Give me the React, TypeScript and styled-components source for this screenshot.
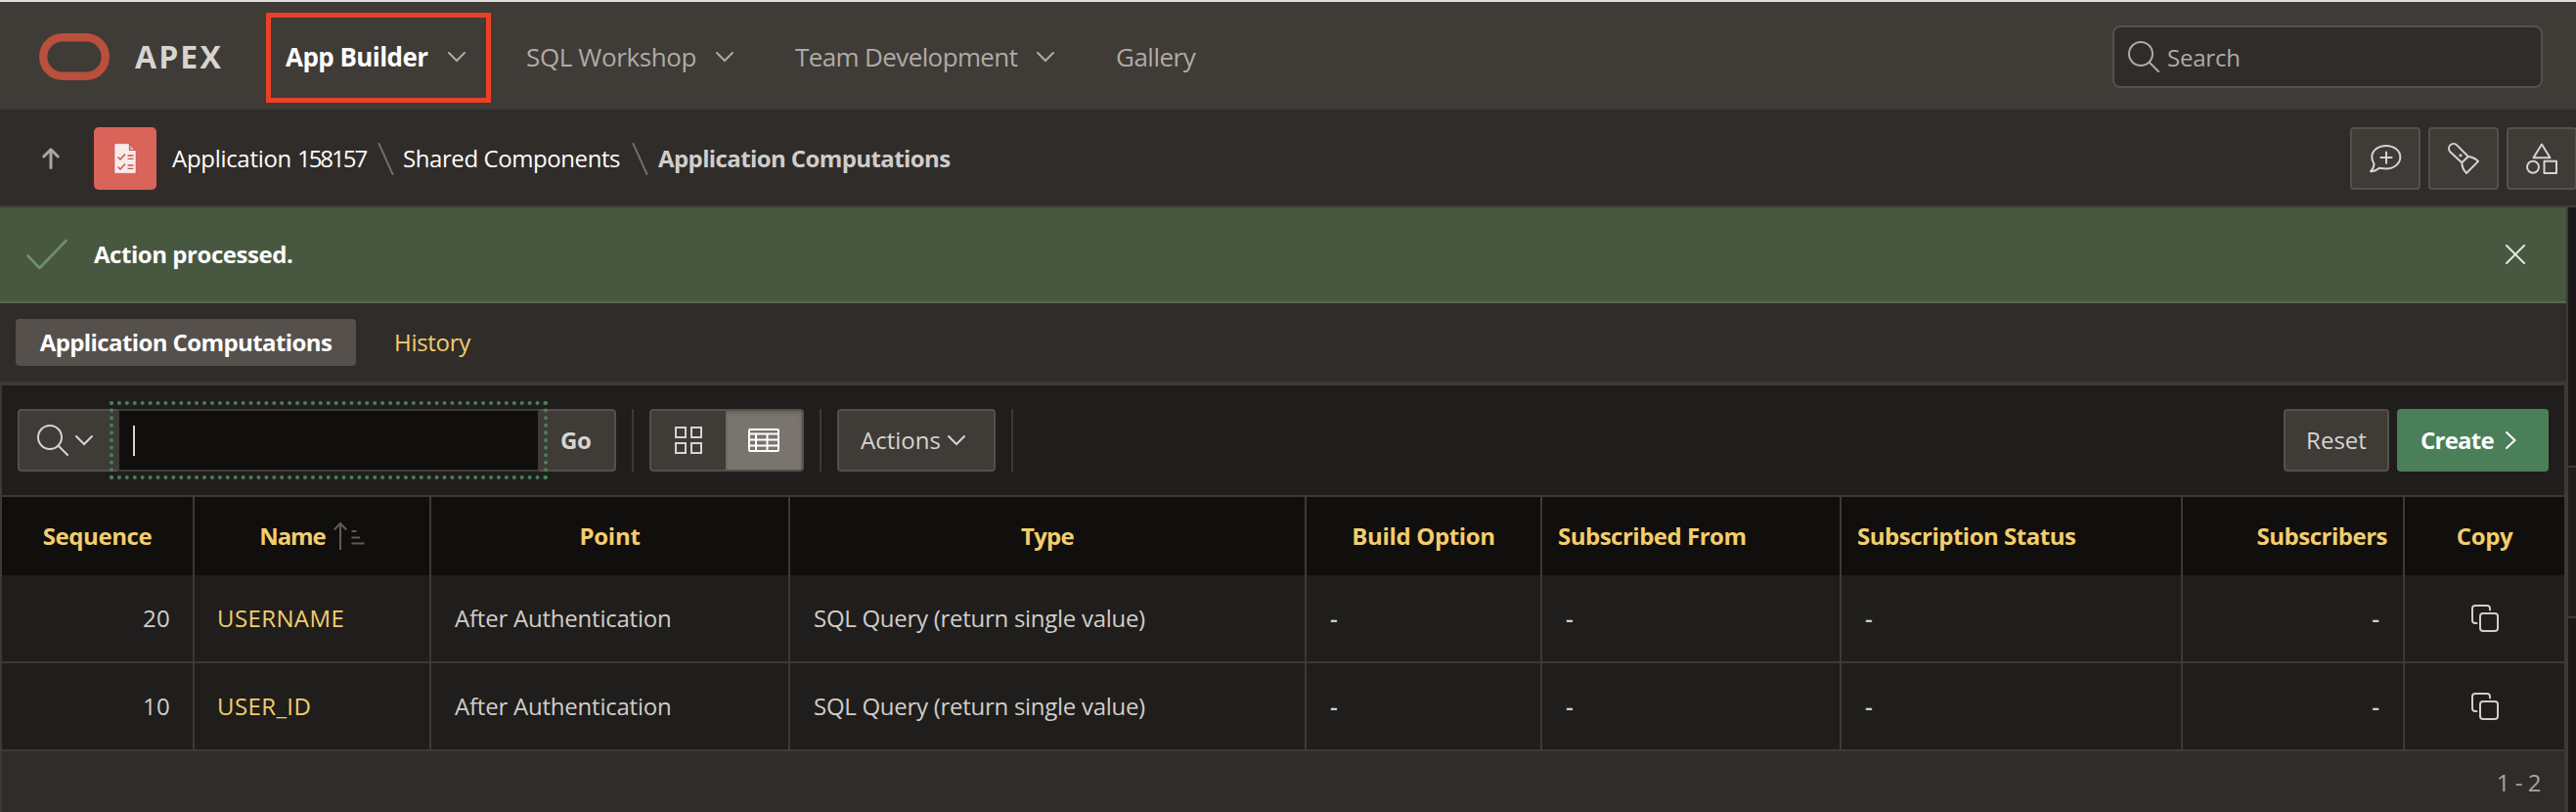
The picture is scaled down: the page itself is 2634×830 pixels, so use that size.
import React from "react";
import styled, { createGlobalStyle } from "styled-components";

const GlobalStyle = createGlobalStyle`
  * { box-sizing: border-box; }
  body {
    margin: 0;
    background: #302c2a;
    font-family: "Open Sans", "Noto Sans", sans-serif;
    font-size: 24px;
    color: #d0cdca;
    overflow: hidden;
  }
  svg { display: block; flex: none; }
`;

const Page = styled.div`
  width: 2634px;
  height: 830px;
  display: flex;
  flex-direction: column;
  overflow: hidden;
`;

const Label = styled.span<{ $track?: number }>`
  white-space: nowrap;
  letter-spacing: ${(p) => p.$track ?? 0}px;
`;

/* Top navigation */

const Header = styled.header`
  height: 112px;
  flex: none;
  display: flex;
  align-items: center;
  padding: 0 34px 0 40px;
  border-top: 2px solid #dedede;
  background: #3f3b36;
`;

const Brand = styled.div`
  width: 252px;
  display: flex;
  align-items: center;
  gap: 26px;
  font-size: 32px;
  font-weight: 700;
  color: #d6d4d1;
`;

const Nav = styled.nav`
  flex: 1;
  display: flex;
  align-items: center;
  padding-top: 2px;
  font-size: 26px;
  color: #aeaba7;
`;

const NavItem = styled.div<{ $width: number; $active?: boolean }>`
  position: relative;
  width: ${(p) => p.$width}px;
  display: flex;
  align-items: center;
  gap: 20px;
  color: ${(p) => (p.$active ? "#fff" : "inherit")};
  font-weight: ${(p) => (p.$active ? 700 : 400)};
`;

const Highlight = styled.span`
  position: absolute;
  top: -27px;
  left: -20px;
  width: 230px;
  height: 92px;
  border: 5px solid #ec4026;
`;

const SearchBox = styled.div`
  width: 440px;
  height: 64px;
  margin-top: 2px;
  display: flex;
  align-items: center;
  gap: 8px;
  padding-left: 14px;
  border: 2px solid #55504b;
  border-radius: 8px;
  background: #302c2a;
  color: #aeaba7;
`;

/* Breadcrumb bar */

const CrumbBar = styled.div`
  height: 100px;
  flex: none;
  display: flex;
  align-items: center;
  padding: 2px 0 0 43px;
  border-bottom: 2px solid #3f3b36;
  background: #302c2a;
`;

const AppTile = styled.div`
  width: 64px;
  height: 64px;
  margin: 0 16px 0 35px;
  display: flex;
  align-items: center;
  justify-content: center;
  border-radius: 5px;
  background: #d9645a;
`;

const Crumb = styled.div<{ $width: number; $indent?: number; $current?: boolean }>`
  width: ${(p) => p.$width}px;
  margin-top: -2px;
  padding-left: ${(p) => p.$indent ?? 0}px;
  color: ${(p) => (p.$current ? "#d0cdca" : "#fff")};
  font-weight: ${(p) => (p.$current ? 700 : 400)};
`;

const CrumbTools = styled.div`
  margin-left: auto;
  margin-right: -1px;
  display: flex;
  gap: 8px;
`;

const Button = styled.div<{ $width: number; $primary?: boolean; $bold?: boolean }>`
  width: ${(p) => p.$width}px;
  height: 64px;
  flex: none;
  display: flex;
  align-items: center;
  justify-content: center;
  border: 2px solid ${(p) => (p.$primary ? "#4b7f59" : "#55504b")};
  border-radius: 4px;
  background: ${(p) => (p.$primary ? "#4b7f59" : "#3f3b36")};
  color: ${(p) => (p.$primary ? "#fff" : "#d6d4d1")};
  font-weight: ${(p) => (p.$primary || p.$bold ? 700 : 400)};
`;

/* Body */

const Body = styled.div`
  flex: 1;
  display: flex;
  min-height: 0;
  ${Label} { margin-top: -2px; }
`;

const Main = styled.main`
  width: 2626px;
  display: flex;
  flex-direction: column;
  border-right: 2px solid #3d3a35;
`;

const SideStrip = styled.aside`
  flex: 1;
  display: flex;
  flex-direction: column;
  background: #1b1917;
`;

const SidePanel = styled.div<{ $height: number; $raised?: boolean }>`
  height: ${(p) => p.$height}px;
  border-bottom: 2px solid #3d3a35;
  background: ${(p) => (p.$raised ? "#201e1c" : "transparent")};
`;

const Notice = styled.div`
  height: 98px;
  flex: none;
  display: flex;
  align-items: center;
  justify-content: space-between;
  padding: 0 42px 0 27px;
  border-bottom: 2px solid #526a4c;
  background: #485840;
  color: #fff;
  font-weight: 700;
`;

const NoticeText = styled.div`
  display: flex;
  align-items: center;
  gap: 27px;
`;

const Tabs = styled.div`
  height: 84px;
  flex: none;
  display: flex;
  align-items: center;
  gap: 39px;
  padding-left: 16px;
  border-bottom: 4px solid #3d3a35;
  background: #302c2a;
  color: #f3cd6d;
`;

const ActiveTab = styled.div`
  width: 348px;
  height: 48px;
  display: flex;
  align-items: center;
  justify-content: center;
  border-radius: 4px;
  background: #55504b;
  color: #fff;
  font-weight: 700;
`;

const Report = styled.section`
  flex: 1;
  display: flex;
  flex-direction: column;
  border-left: 2px solid #3d3a35;
  border-right: 2px solid #3d3a35;
`;

const Toolbar = styled.div`
  height: 114px;
  flex: none;
  display: flex;
  align-items: center;
  padding: 0 16px;
  border-bottom: 2px solid #3d3a35;
  background: #201e1c;
`;

const SearchMenu = styled.div`
  width: 102px;
  height: 64px;
  display: flex;
  align-items: center;
  gap: 7px;
  padding-left: 18px;
  border: 2px solid #55504b;
  border-right: 0;
  border-radius: 4px 0 0 4px;
  background: #3f3b36;
`;

const SearchField = styled.div`
  width: 432px;
  height: 64px;
  display: flex;
  align-items: center;
  padding-left: 14px;
  border: 2px solid #3f3b36;
  background: #100f0d;
  outline: 4px dotted #4b7f59;
  outline-offset: 4px;
  z-index: 1;
`;

const Caret = styled.span`
  width: 2px;
  height: 31px;
  background: #d6d4d1;
`;

const GoButton = styled(Button)`
  border-left: 0;
  border-radius: 0 4px 4px 0;
  justify-content: flex-start;
  padding-left: 21px;
`;

const ActionsButton = styled(Button)`
  justify-content: flex-start;
  gap: 7px;
  padding-left: 22px;
`;

const CreateButton = styled(Button)`
  justify-content: flex-start;
  gap: 11px;
  padding-left: 22px;
`;

const Divider = styled.span`
  width: 2px;
  height: 64px;
  margin: 0 16px;
  background: #3d3a35;
`;

const ViewSwitch = styled.div`
  width: 158px;
  height: 64px;
  display: flex;
  border: 2px solid #55504b;
  border-radius: 4px;
  overflow: hidden;
  background: #3f3b36;
`;

const ViewOption = styled.div<{ $width: number; $active?: boolean }>`
  width: ${(p) => p.$width}px;
  display: flex;
  align-items: center;
  justify-content: center;
  background: ${(p) => (p.$active ? "#7a746e" : "transparent")};
  box-shadow: ${(p) => (p.$active ? "inset 0 2px 4px rgba(0, 0, 0, 0.2)" : "none")};
`;

const ToolbarEnd = styled.div`
  margin-left: auto;
  display: flex;
  gap: 8px;
`;

const Row = styled.div<{ $head?: boolean }>`
  height: ${(p) => (p.$head ? 80 : 90)}px;
  flex: none;
  display: grid;
  grid-template-columns: 197px 242px 367px 528px 241px 306px 349px 227px 163px;
  border-bottom: ${(p) => (p.$head ? "0" : "2px solid #3d3a35")};
  background: ${(p) => (p.$head ? "#100f0d" : "#201e1c")};
  color: ${(p) => (p.$head ? "#f3cd6d" : "#d0cdca")};
  font-weight: ${(p) => (p.$head ? 700 : 400)};
`;

const Cell = styled.div<{ $align?: string; $pad?: number; $link?: boolean }>`
  display: flex;
  align-items: center;
  justify-content: ${(p) => p.$align ?? "flex-start"};
  gap: 8px;
  padding: 0 ${(p) => p.$pad ?? 24}px;
  border-right: 2px solid #3d3a35;
  color: ${(p) => (p.$link ? "#f3cd6d" : "inherit")};
  &:last-child { border-right: 0; }
`;

const EmptyValue = styled(Label)`
  font-weight: 600;
`;

const Footer = styled.div`
  flex: 1;
  display: flex;
  align-items: center;
  justify-content: flex-end;
  padding: 2px 24px 0 0;
  background: #302c2a;
  color: #a8a5a1;
`;

/* Icons */

const Chevron = ({ color = "#d6d4d1" }: { color?: string }) => (
  <svg width="18" height="12" viewBox="0 0 18 12" fill="none" stroke={color} strokeWidth="2" strokeLinecap="round">
    <path d="M1 2 9 10 17 2" />
  </svg>
);

const ChevronRight = () => (
  <svg width="12" height="20" viewBox="0 0 12 20" fill="none" stroke="#fff" strokeWidth="2" strokeLinecap="round">
    <path d="M2 2 10.5 10 2 18" />
  </svg>
);

const Magnifier = ({ color }: { color: string }) => (
  <svg width="32" height="32" viewBox="0 0 32 32" fill="none" stroke={color} strokeWidth="2" strokeLinecap="round">
    <circle cx="13" cy="13" r="12" />
    <path d="M22 22 31 31" />
  </svg>
);

const Logo = () => (
  <svg width="72" height="50" viewBox="0 0 72 50" fill="none">
    <rect x="4.2" y="6.2" width="63.6" height="39.6" rx="19.8" stroke="#b94f3c" strokeWidth="8.4" />
  </svg>
);

const UpArrow = () => (
  <svg width="18" height="22" viewBox="0 0 18 22" fill="none" stroke="#a8a5a2" strokeWidth="3" strokeLinecap="round" strokeLinejoin="round">
    <path d="M9 20.5V2M1.8 9 9 1.8 16.2 9" />
  </svg>
);

const DocIcon = () => (
  <svg width="24" height="32" viewBox="0 0 24 32" fill="none" stroke="#c4574f">
    <path d="M1 .7h15.500l6.500 6.800v23.800H1z" fill="#f8ebea" strokeOpacity=".6" />
    <path d="M16.500 .7v6.800H23z" fill="#eba9a4" strokeWidth="1.200" />
    <path d="M4.500 14.500 7 17l5-5.500M4.500 24.500 7 27l5-5.500" strokeWidth="1.500" />
    <path d="M14.500 13h6M14.500 16.300h6M14.500 23h6M14.500 26.300h6" strokeWidth="1.300" />
  </svg>
);

const Slash = () => (
  <svg width="17" height="33" viewBox="0 0 17 33" stroke="#716e6a" strokeWidth="2" strokeLinecap="round">
    <path d="M1.500 1 15.500 32" />
  </svg>
);

const CommentAdd = () => (
  <svg width="34" height="32" viewBox="0 0 34 32" fill="none" stroke="#d6d4d1" strokeWidth="2" strokeLinecap="round" strokeLinejoin="round">
    <path d="M10.800 25.800C8.500 28 5.500 29.200 2 29.200 4.300 26.800 5.600 24.200 5.500 21.300 3.900 19.200 3.300 17 3.300 14.600 3.300 8 9.600 3 17.800 3S32.300 8 32.300 14.600 26 26.400 17.800 26.400C15.200 26.400 13 26 10.800 25.800Z" />
    <path d="M18 9.500v11.200M12.400 15.100h11.200" />
  </svg>
);

const Flashlight = () => (
  <svg width="32" height="32" viewBox="0 0 32 32" fill="none" stroke="#d6d4d1" strokeWidth="2" strokeLinejoin="round">
    <path d="M20.800 14 9.200 2.400A4.300 4.300 0 0 0 2.400 9.200L14.200 20.300M20.800 14C24 14.300 28 16 31 18.900L19 31C16 28 14.500 24 14.200 20.300L20.800 14" />
    <circle cx="13" cy="12.800" r=".6" />
  </svg>
);

const Shapes = () => (
  <svg width="32" height="32" viewBox="0 0 32 32" fill="none" stroke="#d6d4d1" strokeWidth="2" strokeLinejoin="round">
    <path d="M16 1.500 24.500 15.300h-17z" />
    <circle cx="7" cy="24.800" r="6" />
    <path d="M18.500 18.800h12.500v12.200h-12.500z" />
  </svg>
);

const Check = () => (
  <svg width="42" height="32" viewBox="0 0 42 32" fill="none" stroke="#6c9465" strokeWidth="2.600" strokeLinecap="round" strokeLinejoin="round">
    <path d="M1.500 17.500 13.500 30 40.500 2" />
  </svg>
);

const Close = () => (
  <svg width="20" height="20" viewBox="0 0 20 20" stroke="#e4e6e2" strokeWidth="2" strokeLinecap="round">
    <path d="M1 1 19 19M19 1 1 19" />
  </svg>
);

const GridIcon = () => (
  <svg width="30" height="28" viewBox="0 0 30 28" fill="none" stroke="#d6d4d1" strokeWidth="2">
    <path d="M2 1h10v10H2zM18 1h10v10H18zM2 17h10v10H2zM18 17h10v10H18z" />
  </svg>
);

const TableIcon = () => (
  <svg width="32" height="24" viewBox="0 0 32 24" fill="none" stroke="#fff" strokeWidth="2">
    <rect x="1" y="1" width="30" height="22" rx="1" />
    <path d="M1 5.500h30M1 11.500h30M1 17.500h30M8 5.500v17.500M19.500 5.500v17.500" />
  </svg>
);

const SortAsc = () => (
  <svg width="32" height="30" viewBox="0 0 32 30" fill="none" stroke="#5f5c58" strokeWidth="2">
    <path d="M7 29V2M.8 8.500 7 2 13.200 8.500M18.500 10h5M18.500 16.500h8.500M18.500 22.500h13" />
  </svg>
);

const CopyIcon = () => (
  <svg width="28" height="28" viewBox="0 0 28 28" fill="none" stroke="#d0cdca" strokeWidth="2" strokeLinecap="round">
    <rect x="9" y="9" width="18" height="18" rx="3" />
    <path d="M5.500 19H4a3 3 0 0 1-3-3V4a3 3 0 0 1 3-3h12a3 3 0 0 1 3 3v1.500" />
  </svg>
);

const computations = [
  { sequence: "20", name: "USERNAME" },
  { sequence: "10", name: "USER_ID" },
];

export default function App() {
  return (
    <Page>
      <GlobalStyle />
      <Header>
        <Brand>
          <Logo />
          <Label $track={2.1}>APEX</Label>
        </Brand>
        <Nav>
          <NavItem $width={246} $active>
            <Label $track={-0.55}>App Builder</Label>
            <Chevron color="#aeaba7" />
            <Highlight />
          </NavItem>
          <NavItem $width={275}>
            <Label $track={-0.38}>SQL Workshop</Label>
            <Chevron color="#aeaba7" />
          </NavItem>
          <NavItem $width={328}>
            <Label $track={-0.62}>Team Development</Label>
            <Chevron color="#aeaba7" />
          </NavItem>
          <NavItem $width={90}>
            <Label $track={-0.5}>Gallery</Label>
          </NavItem>
        </Nav>
        <SearchBox>
          <Magnifier color="#aeaba7" />
          <Label $track={-0.2}>Search</Label>
        </SearchBox>
      </Header>

      <CrumbBar>
        <UpArrow />
        <AppTile>
          <DocIcon />
        </AppTile>
        <Crumb $width={210}>
          <Label $track={-0.3}>Application </Label>
          <Label $track={-2}>158157</Label>
        </Crumb>
        <Slash />
        <Crumb $width={243} $indent={9}>
          <Label $track={-0.42}>Shared Components</Label>
        </Crumb>
        <Slash />
        <Crumb $width={320} $indent={10} $current>
          <Label $track={-0.6}>Application Computations</Label>
        </Crumb>
        <CrumbTools>
          <Button $width={72}><CommentAdd /></Button>
          <Button $width={72}><Flashlight /></Button>
          <Button $width={72}><Shapes /></Button>
        </CrumbTools>
      </CrumbBar>

      <Body>
        <Main>
          <Notice>
            <NoticeText>
              <Check />
              <Label $track={-0.45}>Action processed.</Label>
            </NoticeText>
            <Close />
          </Notice>
          <Tabs>
            <ActiveTab>
              <Label $track={-0.6}>Application Computations</Label>
            </ActiveTab>
            <Label $track={-0.3}>History</Label>
          </Tabs>
          <Report>
            <Toolbar>
              <SearchMenu>
                <Magnifier color="#d6d4d1" />
                <Chevron />
              </SearchMenu>
              <SearchField>
                <Caret />
              </SearchField>
              <GoButton $width={78} $bold>
                <Label $track={-0.4}>Go</Label>
              </GoButton>
              <Divider />
              <ViewSwitch>
                <ViewOption $width={76}><GridIcon /></ViewOption>
                <ViewOption $width={78} $active><TableIcon /></ViewOption>
              </ViewSwitch>
              <Divider />
              <ActionsButton $width={162}>
                <Label>Actions</Label>
                <Chevron />
              </ActionsButton>
              <Divider />
              <ToolbarEnd>
                <Button $width={108}><Label>Reset</Label></Button>
                <CreateButton $width={155} $primary>
                  <Label $track={-0.75}>Create</Label>
                  <ChevronRight />
                </CreateButton>
              </ToolbarEnd>
            </Toolbar>

            <Row $head>
              <Cell $align="center"><Label $track={-0.43}>Sequence</Label></Cell>
              <Cell $align="center">
                <Label $track={-1.1}>Name</Label>
                <SortAsc />
              </Cell>
              <Cell $align="center"><Label $track={-0.25}>Point</Label></Cell>
              <Cell $align="center"><Label $track={-0.7}>Type</Label></Cell>
              <Cell $align="center"><Label $track={-0.35}>Build Option</Label></Cell>
              <Cell $pad={16}><Label $track={-0.5}>Subscribed From</Label></Cell>
              <Cell $pad={16}><Label $track={-0.49}>Subscription Status</Label></Cell>
              <Cell $pad={16} $align="flex-end"><Label $track={-0.49}>Subscribers</Label></Cell>
              <Cell $align="center"><Label $track={-0.4}>Copy</Label></Cell>
            </Row>
            {computations.map((c) => (
              <Row key={c.name}>
                <Cell $align="flex-end" $pad={23}><Label $track={0.3}>{c.sequence}</Label></Cell>
                <Cell $link $pad={23}><Label $track={0.4}>{c.name}</Label></Cell>
                <Cell><Label $track={-0.22}>After Authentication</Label></Cell>
                <Cell><Label $track={-0.28}>SQL Query (return single value)</Label></Cell>
                <Cell><EmptyValue>-</EmptyValue></Cell>
                <Cell><EmptyValue>-</EmptyValue></Cell>
                <Cell><EmptyValue>-</EmptyValue></Cell>
                <Cell $align="flex-end"><EmptyValue>-</EmptyValue></Cell>
                <Cell $align="center"><CopyIcon /></Cell>
              </Row>
            ))}
            <Footer>
              <Label $track={-0.5}>1 - 2</Label>
            </Footer>
          </Report>
        </Main>
        <SideStrip>
          <SidePanel $height={266} />
          <SidePanel $height={154} $raised />
        </SideStrip>
      </Body>
    </Page>
  );
}
